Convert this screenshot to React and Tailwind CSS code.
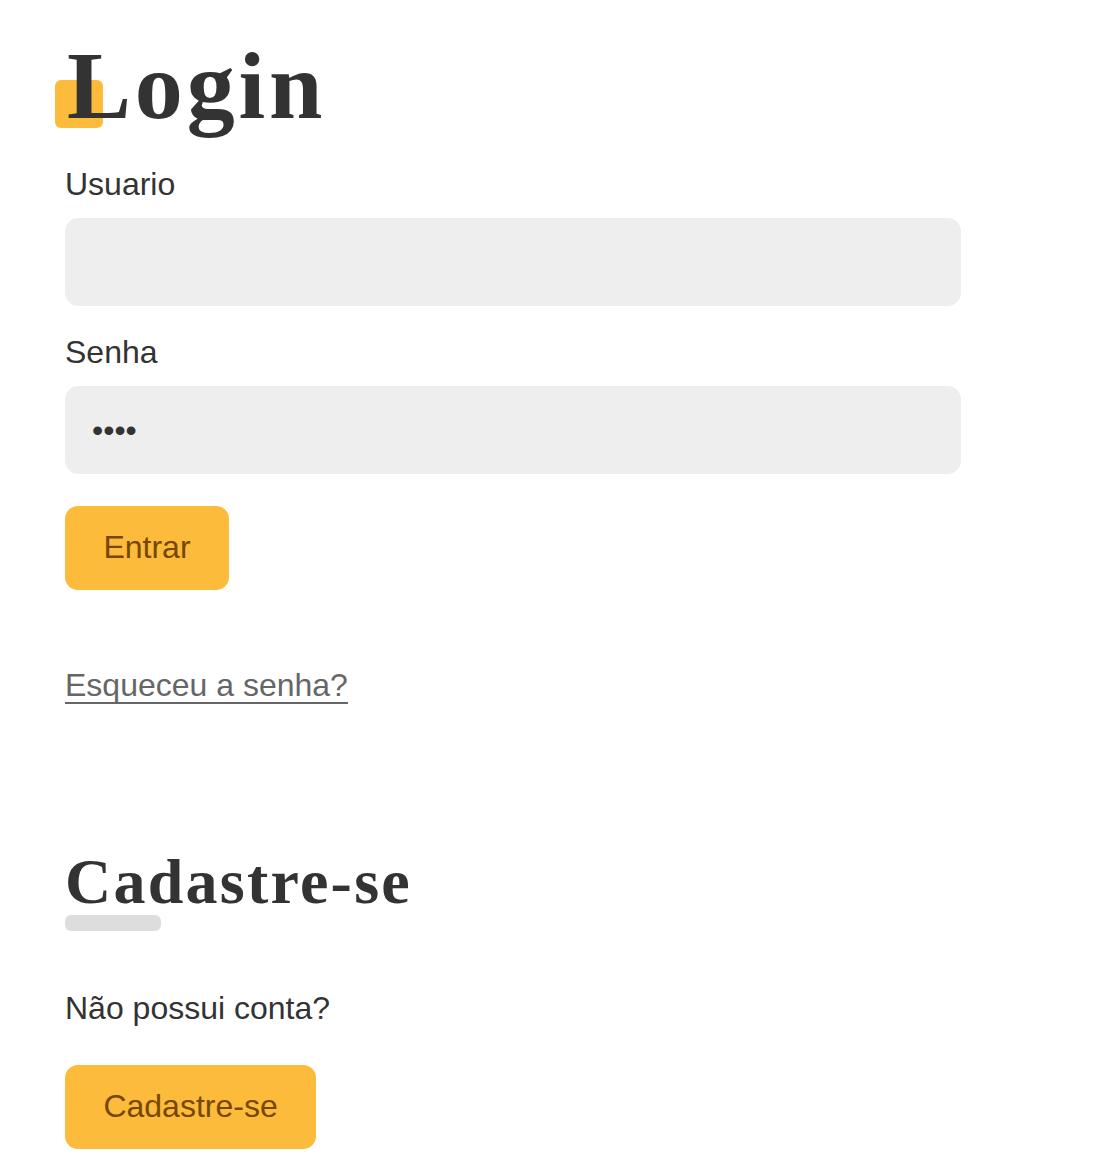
import { useState } from 'react';

function Field({ label, type = 'text', value, onChange }) {
    return (
        <div className="mb-[30px]">
            <label className="block pb-[18px] text-[32px] leading-none text-[#333]">{label}</label>
            <input
                type={type}
                value={value}
                onChange={onChange}
                className="block w-[896px] h-[88px] px-[26px] rounded-[13px] bg-[#eee] border border-[#eee] text-[32px] text-[#333] outline-none font-['Liberation_Sans',sans-serif]"
            />
        </div>
    );
}

function Button({ children }) {
    return (
        <button className="h-[84px] px-[38.4px] pb-[3px] rounded-[13px] bg-[#fdbb3b] text-[#764701] text-[32px] leading-none font-['Liberation_Sans',sans-serif]">
            {children}
        </button>
    );
}

export default function App() {
    const [username, setUsername] = useState('');
    const [password, setPassword] = useState('1234');

    return (
        <div className="pl-[65px] pt-[38px] pb-[20px] bg-white min-h-[1168px] font-['Liberation_Sans',sans-serif] text-[#333]">
            <section>
                <h1 className="relative z-[1] mb-[34px] text-[96px] leading-none font-bold tracking-[0.04em] font-['Liberation_Serif',serif]">
                    <span className="ml-[2px]">Login</span>
                    <span className="absolute -left-[10px] bottom-[6px] -z-10 w-[48px] h-[48px] rounded-[6px] bg-[#fdbb3b]" />
                </h1>
                <form onSubmit={(e) => e.preventDefault()}>
                    <Field label="Usuario" value={username} onChange={(e) => setUsername(e.target.value)} />
                    <Field label="Senha" type="password" value={password} onChange={(e) => setPassword(e.target.value)} />
                    <div className="pt-[2px]">
                        <Button>Entrar</Button>
                    </div>
                </form>
                <a href="#" className="inline-block mt-[63px] pt-[16px] pb-[16px] text-[32px] leading-none text-[#666]">
                    Esqueceu a senha?
                    <span className="block mt-[1px] h-[2px] w-full bg-[#666]" />
                </a>
            </section>

            <section className="mt-[130px]">
                <h2 className="text-[64px] leading-none font-bold tracking-[0.035em] font-['Liberation_Serif',serif]">
                    Cadastre-se
                    <span className="block mt-[1px] w-[96px] h-[16px] rounded-[6px] bg-[#ddd]" />
                </h2>
                <p className="mt-[59px] mb-[39px] text-[32px] leading-[36px]">Não possui conta?</p>
                <Button>Cadastre-se</Button>
            </section>
        </div>
    );
}
